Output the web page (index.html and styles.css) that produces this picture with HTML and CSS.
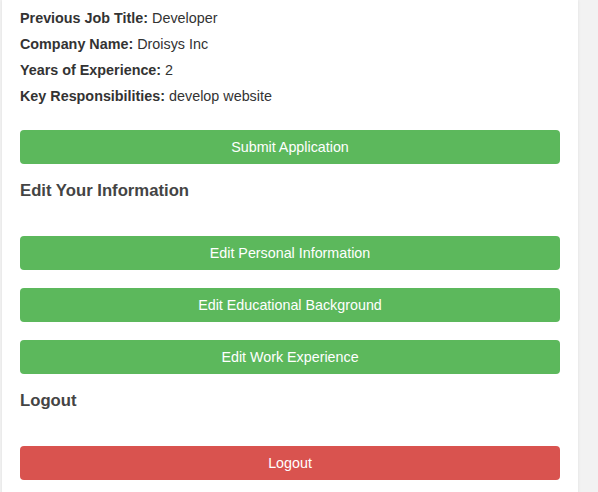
FILE: index.html
```html
<!DOCTYPE html>
<html>
<head>
<meta charset="utf-8">
<link rel="stylesheet" href="styles.css">
</head>
<body>
<div class="card">
  <div class="info">
    <p class="line"><strong>Previous Job Title:</strong> Developer</p>
    <p class="line"><strong>Company Name:</strong> Droisys Inc</p>
    <p class="line"><strong>Years of Experience:</strong> 2</p>
    <p class="line"><strong>Key Responsibilities:</strong> develop website</p>
  </div>
  <button class="btn btn-green btn-submit">Submit Application</button>
  <h2 class="heading">Edit Your Information</h2>
  <div class="btn-list">
    <button class="btn btn-green">Edit Personal Information</button>
    <button class="btn btn-green">Edit Educational Background</button>
    <button class="btn btn-green">Edit Work Experience</button>
  </div>
  <h2 class="heading">Logout</h2>
  <button class="btn btn-red">Logout</button>
</div>
</body>
</html>
```
FILE: styles.css
```css
html, body {
  margin: 0;
  padding: 0;
  background: #f2f2f2;
  font-family: "Liberation Sans", Arial, sans-serif;
  color: #333;
}
.card {
  box-sizing: border-box;
  width: 576px;
  margin-left: 2px;
  background: #fff;
  padding: 5px 18px 20px;
  box-shadow: 0 0 3px rgba(0, 0, 0, 0.08);
  display: flex;
  flex-direction: column;
}
.info {
  display: flex;
  flex-direction: column;
}
.line {
  margin: 0;
  font-size: 14.35px;
  line-height: 26px;
}
.line strong {
  font-weight: bold;
}
.btn {
  display: block;
  width: 100%;
  height: 34px;
  border: none;
  border-radius: 4px;
  color: #fff;
  font-family: "Liberation Sans", Arial, sans-serif;
  font-size: 14.3px;
  padding: 0;
  cursor: pointer;
}
.btn-green {
  background: #5cb85c;
}
.btn-red {
  background: #d9534f;
}
.btn-submit {
  margin-top: 21px;
}
.heading {
  margin: 17px 0 35px;
  font-size: 16.7px;
  line-height: 20px;
  font-weight: bold;
  color: #444;
}
.btn-list {
  display: flex;
  flex-direction: column;
  gap: 18px;
}
```
